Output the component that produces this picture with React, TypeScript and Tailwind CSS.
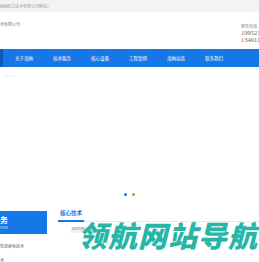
import React from "react";

const navItems = ["关于海纳", "技术服务", "核心设备", "工程案例", "海纳动态", "联系我们"];

export default function App() {
  return (
    <div className="relative w-[259px] h-[262px] overflow-hidden bg-white font-['Noto_Sans_CJK_SC',sans-serif] leading-none">
      {/* top bar */}
      <div className="h-[12px] bg-[#f3f3f3] flex items-center whitespace-nowrap">
        <span className="ml-[-1px] text-[4px] text-[#9a9a9a]">海纳机工技术有限公司网站！</span>
      </div>
      {/* header */}
      <div className="h-[37px] flex">
        <div className="flex flex-col pt-[3px] gap-[4px] whitespace-nowrap">
          <span className="text-[3px] text-[#e6e6e6]">· · · · · · ·</span>
          <span className="text-[4px] text-[#777]">术有限公司</span>
          <span className="text-[3px] text-[#ececec]">· · · · · · · ·</span>
        </div>
        <div className="ml-auto w-[18px] pt-[12px] flex flex-col whitespace-nowrap">
          <span className="text-[4px] text-[#888] leading-[5px]">服务热线</span>
          <span className="text-[6.5px] text-[#666] leading-[7px] font-['Liberation_Serif',serif]">19952188888</span>
          <span className="text-[6.5px] text-[#666] leading-[7px] font-['Liberation_Serif',serif]">13401188888</span>
        </div>
      </div>
      {/* nav */}
      <div className="h-[18px] bg-[#1677e6] flex items-center">
        <div className="w-[3px] h-full bg-[#0d5bb7]" />
        <div className="flex ml-[12px]">
          {navItems.map((t) => (
            <div key={t} className="w-[38px] text-[4.5px] text-white whitespace-nowrap">
              {t}
            </div>
          ))}
        </div>
      </div>
      {/* banner */}
      <div className="h-[122px] pt-[8px] pl-[5px]">
        <div className="w-[10px] h-[2px] bg-[#f4f4f4]" />
      </div>
      {/* dots */}
      <div className="h-[10px] flex items-center justify-center gap-[5px]">
        <span className="w-[3px] h-[3px] rounded-full bg-[#1677e6]" />
        <span className="w-[3px] h-[3px] rounded-full bg-[#5ec043]" />
      </div>
      {/* bottom section */}
      <div className="flex pt-[12px]">
        <div className="w-[47px] flex flex-col">
          <div className="h-[23px] bg-[#1677e6] flex flex-col justify-center gap-[3px] whitespace-nowrap overflow-hidden">
            <span className="text-[8px] font-bold text-white">务</span>
            <span className="text-[3px] text-[#cfe2fb]">NTER</span>
          </div>
          <span className="mt-[10px] text-[4px] text-[#555] whitespace-nowrap">性连续化技术</span>
          <span className="mt-[10px] text-[4px] text-[#555] whitespace-nowrap">术</span>
        </div>
        <div className="flex-1 ml-[11px] flex flex-col">
          <div className="flex items-end border-b border-[#e8e8e8]">
            <div className="pb-[3px] border-b-[2px] border-[#1677e6] mb-[-1px] px-[2px] text-[5.5px] font-bold text-[#1677e6] whitespace-nowrap">
              核心技术
            </div>
          </div>
          <div className="mt-[5px] ml-[13px] w-[30px] h-[6px] bg-[#efefef] flex items-center pl-[1px]">
            <span className="text-[3px] text-[#888] whitespace-nowrap">此处为核心技术</span>
          </div>
        </div>
      </div>
      {/* watermark overlay */}
      <div className="absolute left-[78px] top-[220px] text-[29px] font-black italic text-[#27b6a6] whitespace-nowrap tracking-[1px] font-['Noto_Sans_CJK_SC',sans-serif]">
        领航网站导航
      </div>
    </div>
  );
}
